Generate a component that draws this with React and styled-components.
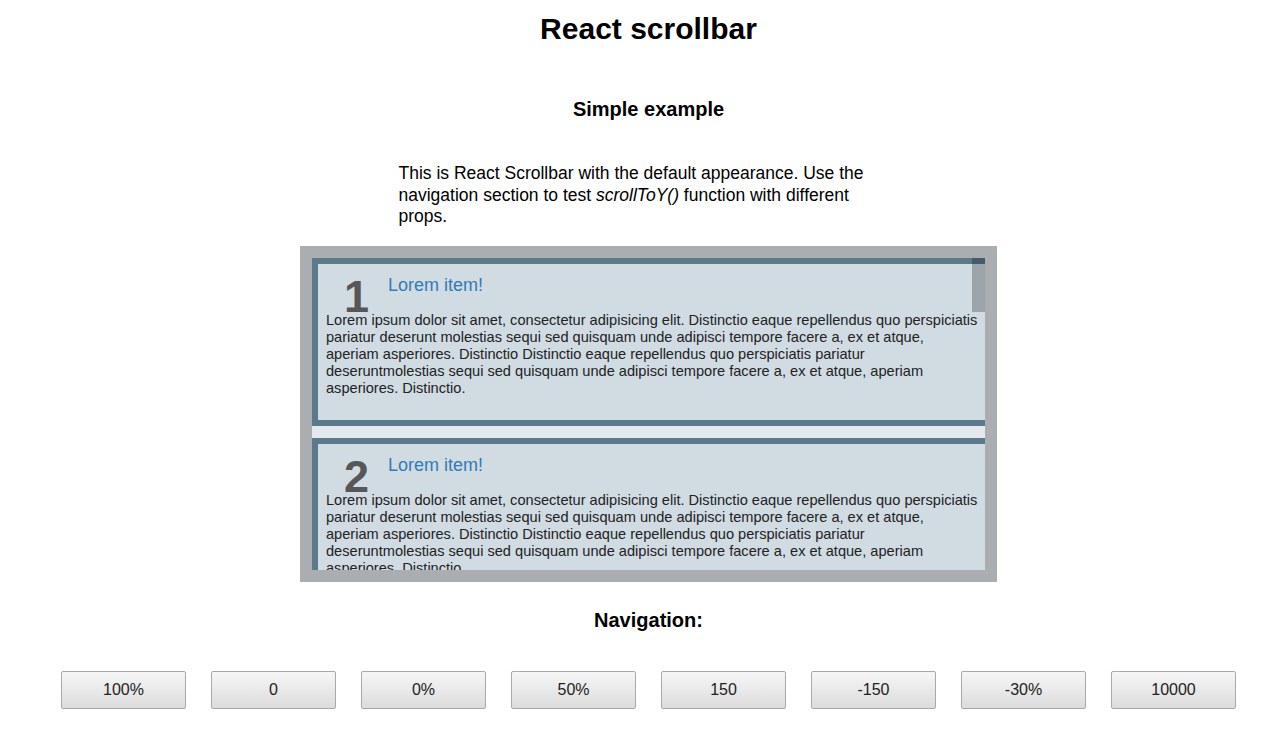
import React from "react";
import styled, { createGlobalStyle } from "styled-components";

const LOREM =
  "Lorem ipsum dolor sit amet, consectetur adipisicing elit. Distinctio eaque repellendus quo perspiciatis pariatur deserunt molestias sequi sed quisquam unde adipisci tempore facere a, ex et atque, aperiam asperiores. Distinctio Distinctio eaque repellendus quo perspiciatis pariatur deseruntmolestias sequi sed quisquam unde adipisci tempore facere a, ex et atque, aperiam asperiores. Distinctio.";

const items = [1, 2, 3, 4, 5];
const navButtons = ["100%", "0", "0%", "50%", "150", "-150", "-30%", "10000"];

export default function App() {
  return (
    <>
      <GlobalStyle />
      <Page>
        <Title>React scrollbar</Title>
        <SectionTitle>Simple example</SectionTitle>
        <Description>
          This is React Scrollbar with the default appearance. Use the
          navigation section to test <em>scrollToY()</em> function with
          different props.
        </Description>
        <ScrollFrame>
          <ScrollArea>
            <ItemList>
              {items.map((n) => (
                <Item key={n}>
                  <ItemHeader>
                    <ItemNumber>{n}</ItemNumber>
                    <ItemTitle>Lorem item!</ItemTitle>
                  </ItemHeader>
                  <ItemText>{LOREM}</ItemText>
                </Item>
              ))}
            </ItemList>
            <ScrollThumb />
          </ScrollArea>
        </ScrollFrame>
        <NavTitle>Navigation:</NavTitle>
        <NavRow>
          {navButtons.map((label) => (
            <NavButton key={label}>{label}</NavButton>
          ))}
        </NavRow>
      </Page>
    </>
  );
}

const GlobalStyle = createGlobalStyle`
  body {
    margin: 0;
    background: #fff;
    font-family: "Liberation Sans", Arial, sans-serif;
    color: #000;
  }
`;

const Page = styled.div`
  padding-left: 19px;
  display: flex;
  flex-direction: column;
  align-items: center;
`;

const Title = styled.h1`
  font-size: 30px;
  line-height: 36px;
  font-weight: bold;
  margin: 11px 0 0;
`;

const SectionTitle = styled.h2`
  font-size: 20px;
  line-height: 24px;
  font-weight: bold;
  margin: 50px 0 0;
`;

const Description = styled.p`
  width: 480px;
  padding-right: 20px;
  font-size: 17.5px;
  line-height: 21.5px;
  margin: 42px 0 0;
`;

const ScrollFrame = styled.div`
  width: 673px;
  padding: 12px;
  margin-top: 18px;
  background: #aaaeb1;
`;

const ScrollArea = styled.div`
  position: relative;
  height: 312px;
  overflow: hidden;
  background: #e4e9ed;
`;

const ItemList = styled.div`
  display: flex;
  flex-direction: column;
  gap: 12px;
`;

const Item = styled.div`
  background: #d0dce2;
  border: 6px solid #5b7b8a;
  border-right: none;
  padding: 0 6px 23px 8px;
`;

const ItemHeader = styled.div`
  display: flex;
  align-items: flex-start;
  height: 48px;
  padding-top: 11px;
  box-sizing: border-box;
`;

const ItemNumber = styled.span`
  font-size: 45px;
  line-height: 1;
  font-weight: bold;
  color: #575757;
  margin-left: 18px;
  margin-top: -1px;
`;

const ItemTitle = styled.h3`
  font-size: 18px;
  font-weight: normal;
  color: #337ab7;
  margin: 0 0 0 19px;
`;

const ItemText = styled.p`
  font-size: 14.6px;
  line-height: 17px;
  color: #222;
  margin: 0;
`;

const ScrollThumb = styled.div`
  position: absolute;
  top: 0;
  right: 0;
  width: 13px;
  height: 54px;
  background: rgba(0, 0, 0, 0.25);
`;

const NavTitle = styled.h2`
  font-size: 20px;
  line-height: 24px;
  font-weight: bold;
  margin: 26px 0 0;
`;

const NavRow = styled.div`
  display: flex;
  justify-content: center;
  gap: 25px;
  margin-top: 39px;
`;

const NavButton = styled.button`
  width: 125px;
  height: 38px;
  font-family: "Liberation Sans", Arial, sans-serif;
  font-size: 16px;
  color: #222;
  background: linear-gradient(#f6f6f6, #dcdcdc);
  border: 1px solid #a9a9a9;
  border-radius: 2px;
  padding: 0;
  cursor: pointer;
`;
